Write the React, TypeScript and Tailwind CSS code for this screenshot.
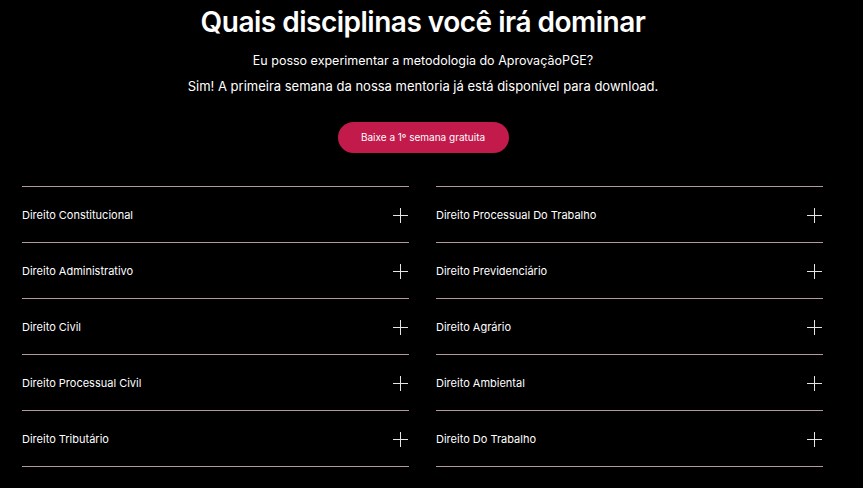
import React from 'react'

const left = [
  'Direito Constitucional',
  'Direito Administrativo',
  'Direito Civil',
  'Direito Processual Civil',
  'Direito Tributário',
]

const right = [
  'Direito Processual Do Trabalho',
  'Direito Previdenciário',
  'Direito Agrário',
  'Direito Ambiental',
  'Direito Do Trabalho',
]

const Plus = () => (
  <svg width="15" height="15" viewBox="0 0 15 15" className="shrink-0">
    <path d="M7.5 0v15M0 7.5h15" stroke="#e5e5e5" strokeWidth="1" fill="none" />
  </svg>
)

const Column = ({ items }: { items: string[] }) => (
  <div className="flex w-[387px] flex-col border-t border-[#b4979c]">
    {items.map((item) => (
      <div
        key={item}
        className="flex h-[56px] items-center justify-between border-b border-[#b4979c] pr-[1px] pt-[2px]"
      >
        <span className="text-[11px] text-white">{item}</span>
        <Plus />
      </div>
    ))}
  </div>
)

export default function App() {
  return (
    <div
      className="h-[488px] w-[863px] overflow-hidden bg-black text-white"
      style={{ fontFamily: 'Inter, "Open Sans", sans-serif' }}
    >
      <div className="flex w-[846px] flex-col items-center">
        <h1 className="mt-[4px] text-[28px] font-semibold leading-[36px] tracking-[-0.5px]">
          Quais disciplinas você irá dominar
        </h1>
        <p className="mt-[8px] text-[12.5px] leading-[26px]">
          Eu posso experimentar a metodologia do AprovaçãoPGE?
        </p>
        <p className="text-[13px] leading-[24px]">
          Sim! A primeira semana da nossa mentoria já está disponível para download.
        </p>
        <button className="mt-[24px] flex h-[31px] w-[171px] items-center justify-center rounded-full bg-[#c11a4b] text-[10px] text-white">
          Baixe a 1º semana gratuita
        </button>
      </div>
      <div className="mt-[33px] flex gap-[27px] pl-[22px]">
        <Column items={left} />
        <Column items={right} />
      </div>
    </div>
  )
}
